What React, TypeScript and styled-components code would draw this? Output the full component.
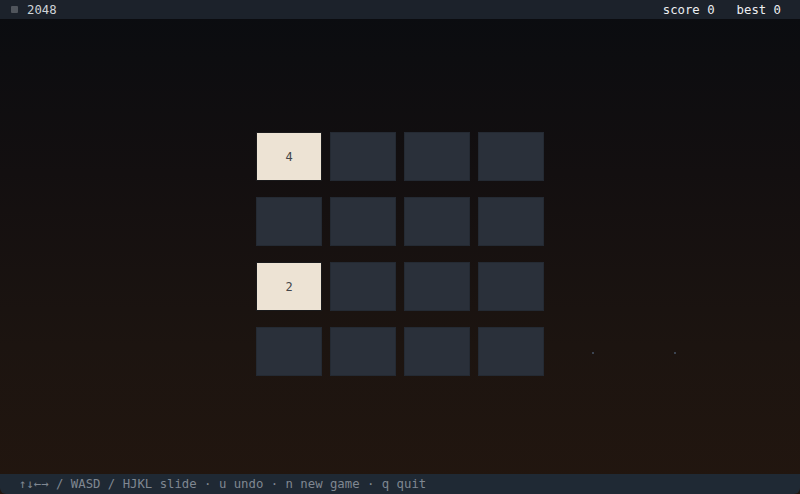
import React from 'react';
import styled, { createGlobalStyle } from 'styled-components';

const GlobalStyle = createGlobalStyle`
  html, body {
    margin: 0;
    padding: 0;
    background: #0b0e12;
  }
  #root {
    height: 100vh;
  }
`;

const board: number[][] = [
  [4, 0, 0, 0],
  [0, 0, 0, 0],
  [2, 0, 0, 0],
  [0, 0, 0, 0],
];

const App = () => {
  return (
    <>
      <GlobalStyle />
      <Screen>
        <TopBar>
          <Title>
            <Badge />
            2048
          </Title>
          <Scores>
            <span>score 0</span>
            <span>best 0</span>
          </Scores>
        </TopBar>
        <Stage>
          <Grid>
            {board.flat().map((v, i) => (
              <Tile key={i} $filled={v > 0}>
                {v > 0 ? v : ''}
              </Tile>
            ))}
          </Grid>
          <Speck style={{ left: 592, top: 333 }} />
          <Speck style={{ left: 674, top: 333 }} />
        </Stage>
        <BottomBar>↑↓←→ / WASD / HJKL slide · u undo · n new game · q quit</BottomBar>
      </Screen>
    </>
  );
};

const Screen = styled.div`
  height: 100vh;
  display: flex;
  flex-direction: column;
  font-family: 'DejaVu Sans Mono', 'Liberation Mono', monospace;
  font-size: 12.3px;
  background: linear-gradient(180deg, #0a0c10 0%, #130f10 35%, #1c1410 70%, #22160f 100%);
`;

const TopBar = styled.header`
  height: 19px;
  flex: none;
  display: flex;
  align-items: center;
  justify-content: space-between;
  padding: 0 19px 0 11px;
  background: #1c222b;
  color: #e2e4e8;
`;

const Title = styled.div`
  display: flex;
  align-items: center;
  gap: 9px;
  color: #cfd3d8;
`;

const Badge = styled.span`
  width: 7px;
  height: 7px;
  border-radius: 1px;
  background: #50555c;
`;

const Scores = styled.div`
  display: flex;
  gap: 22px;
  color: #eceef1;
`;

const Stage = styled.main`
  flex: 1;
  position: relative;
  display: flex;
  align-items: center;
  justify-content: center;
  padding-top: 15px;
`;

const Grid = styled.div`
  display: grid;
  grid-template-columns: repeat(4, 66px);
  grid-auto-rows: 49px;
  column-gap: 8px;
  row-gap: 16px;
`;

const Tile = styled.div<{ $filled: boolean }>`
  display: flex;
  align-items: center;
  justify-content: center;
  box-sizing: border-box;
  border: 1px solid ${(p) => (p.$filled ? '#1a1a1c' : '#242a33')};
  background: ${(p) => (p.$filled ? '#ede3d4' : '#2a303a')};
  color: #45464a;
  font-size: 12px;
`;

const Speck = styled.span`
  position: absolute;
  width: 2px;
  height: 2px;
  background: #3c4450;
`;

const BottomBar = styled.footer`
  height: 20px;
  flex: none;
  display: flex;
  align-items: center;
  padding: 0 19px;
  background: #1f2934;
  color: #7f8791;
  border-radius: 0 0 6px 6px;
  white-space: nowrap;
`;

export default App;
